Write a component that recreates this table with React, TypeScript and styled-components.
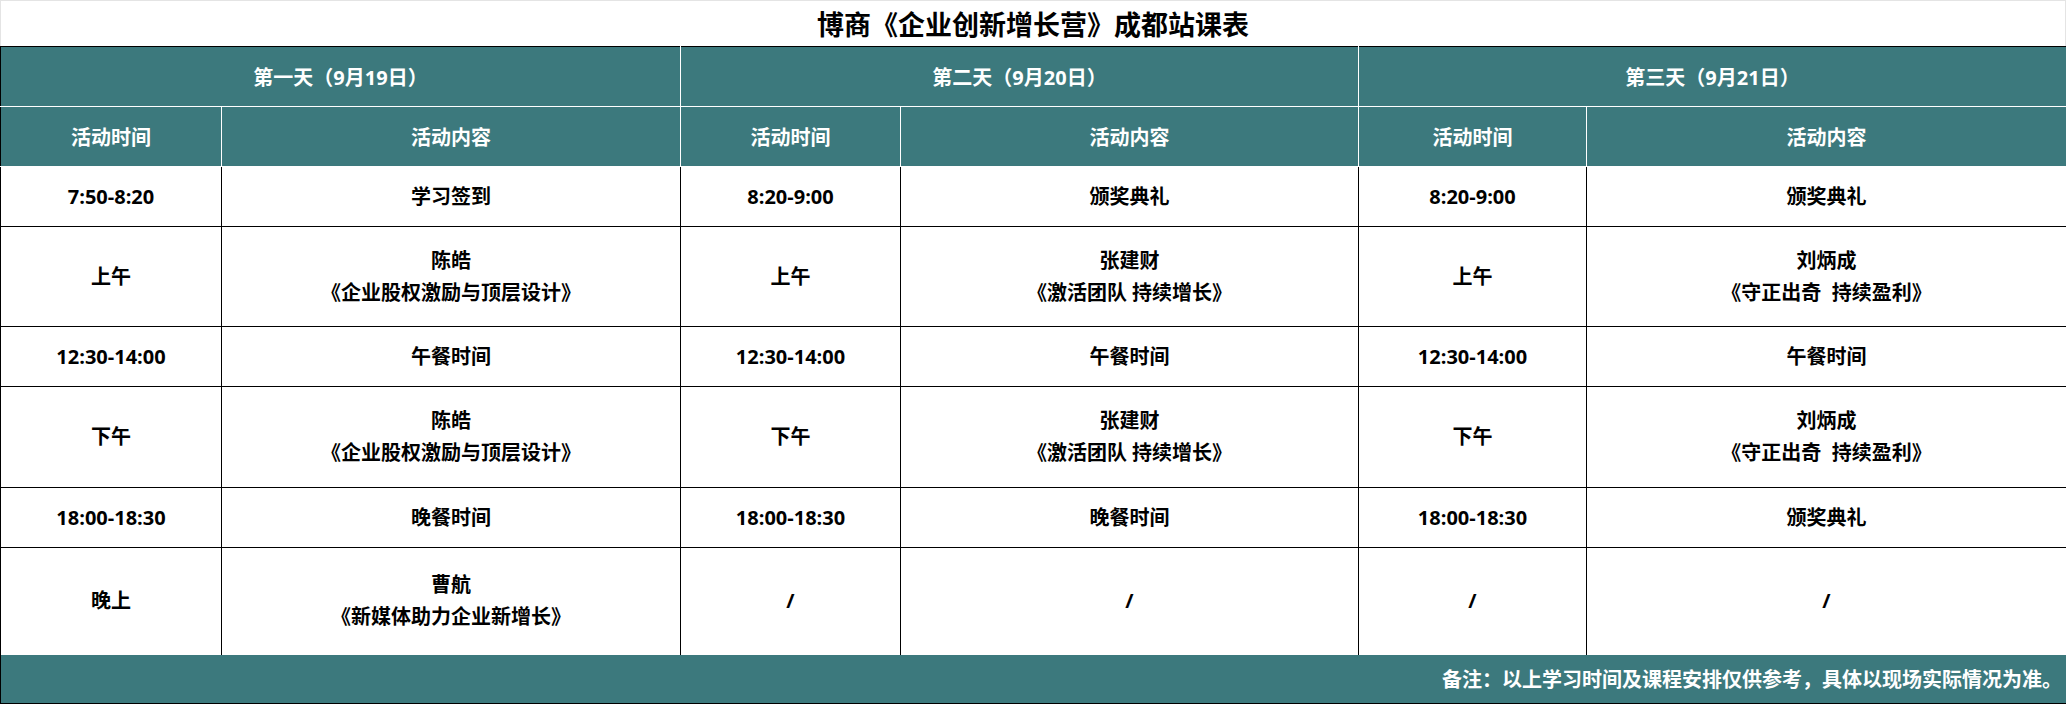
import React from 'react';
import styled, { createGlobalStyle } from 'styled-components';

const TEAL = '#3c797d';
const FONT = '"Open Sans", "Noto Sans CJK SC", sans-serif';

const GlobalStyle = createGlobalStyle`
  html, body {
    margin: 0;
    padding: 0;
    background: #fff;
  }
  body {
    font-family: ${FONT};
  }
`;

const Page = styled.div`
  width: 2066px;
  height: 704px;
  overflow: hidden;
`;

const Title = styled.div`
  box-sizing: border-box;
  height: 46px;
  display: flex;
  align-items: center;
  justify-content: center;
  border: 1px solid #e4e4e4;
  border-bottom: none;
  font-size: 27px;
  font-weight: 700;
  color: #000;
`;

const Table = styled.table`
  width: 2066px;
  border-collapse: collapse;
  table-layout: fixed;
  border: 1px solid #000;
`;

const Row = styled.tr<{ $h: number }>`
  height: ${({ $h }) => $h}px;
`;

const HeadCell = styled.th`
  padding: 0;
  background: ${TEAL};
  color: #fff;
  font-size: 20px;
  font-weight: 700;
  text-align: center;
  vertical-align: middle;
  border-top: none;
  border-left: 1px solid #fff;
  border-right: 1px solid #fff;
  border-bottom: 1px solid #fff;

  &:first-child {
    border-left: none;
  }
  &:last-child {
    border-right: none;
  }
`;

const Cell = styled.td`
  padding: 0;
  border: 1px solid #000;
  text-align: center;
  vertical-align: middle;
  font-size: 20px;
  font-weight: 700;
  color: #000;
  line-height: 32px;
  white-space: pre;
`;

const Line = styled.div`
  line-height: 32px;
`;

const Footer = styled.td`
  padding: 0 4px 0 0;
  background: ${TEAL};
  color: #fff;
  font-size: 20px;
  font-weight: 700;
  text-align: right;
  vertical-align: middle;
  border-top: hidden;
`;

type Content = string | string[];
type Day = { title: string; rows: [string, Content][] };

const days: Day[] = [
  {
    title: '第一天（9月19日）',
    rows: [
      ['7:50-8:20', '学习签到'],
      ['上午', ['陈皓', '《企业股权激励与顶层设计》']],
      ['12:30-14:00', '午餐时间'],
      ['下午', ['陈皓', '《企业股权激励与顶层设计》']],
      ['18:00-18:30', '晚餐时间'],
      ['晚上', ['曹航', '《新媒体助力企业新增长》']],
    ],
  },
  {
    title: '第二天（9月20日）',
    rows: [
      ['8:20-9:00', '颁奖典礼'],
      ['上午', ['张建财', '《激活团队 持续增长》']],
      ['12:30-14:00', '午餐时间'],
      ['下午', ['张建财', '《激活团队 持续增长》']],
      ['18:00-18:30', '晚餐时间'],
      ['/', '/'],
    ],
  },
  {
    title: '第三天（9月21日）',
    rows: [
      ['8:20-9:00', '颁奖典礼'],
      ['上午', ['刘炳成', '《守正出奇  持续盈利》']],
      ['12:30-14:00', '午餐时间'],
      ['下午', ['刘炳成', '《守正出奇  持续盈利》']],
      ['18:00-18:30', '颁奖典礼'],
      ['/', '/'],
    ],
  },
];

const rowHeights = [60, 100, 60, 101, 60, 107];
const colWidths = [221, 459, 220, 458, 228, 480];

function renderContent(c: Content) {
  if (typeof c === 'string') return c;
  return c.map(line => <Line key={line}>{line}</Line>);
}

export default function App() {
  return (
    <>
      <GlobalStyle />
      <Page>
        <Title>博商《企业创新增长营》成都站课表</Title>
        <Table>
          <colgroup>
            {colWidths.map((w, i) => (
              <col key={i} style={{ width: w }} />
            ))}
          </colgroup>
          <thead>
            <Row $h={60}>
              {days.map(d => (
                <HeadCell key={d.title} colSpan={2}>
                  {d.title}
                </HeadCell>
              ))}
            </Row>
            <Row $h={60}>
              {days.map(d => (
                <React.Fragment key={d.title}>
                  <HeadCell>活动时间</HeadCell>
                  <HeadCell>活动内容</HeadCell>
                </React.Fragment>
              ))}
            </Row>
          </thead>
          <tbody>
            {rowHeights.map((h, r) => (
              <Row key={r} $h={h}>
                {days.map(d => (
                  <React.Fragment key={d.title}>
                    <Cell>{d.rows[r][0]}</Cell>
                    <Cell>{renderContent(d.rows[r][1])}</Cell>
                  </React.Fragment>
                ))}
              </Row>
            ))}
            <Row $h={49}>
              <Footer colSpan={6}>备注：以上学习时间及课程安排仅供参考，具体以现场实际情况为准。</Footer>
            </Row>
          </tbody>
        </Table>
      </Page>
    </>
  );
}
